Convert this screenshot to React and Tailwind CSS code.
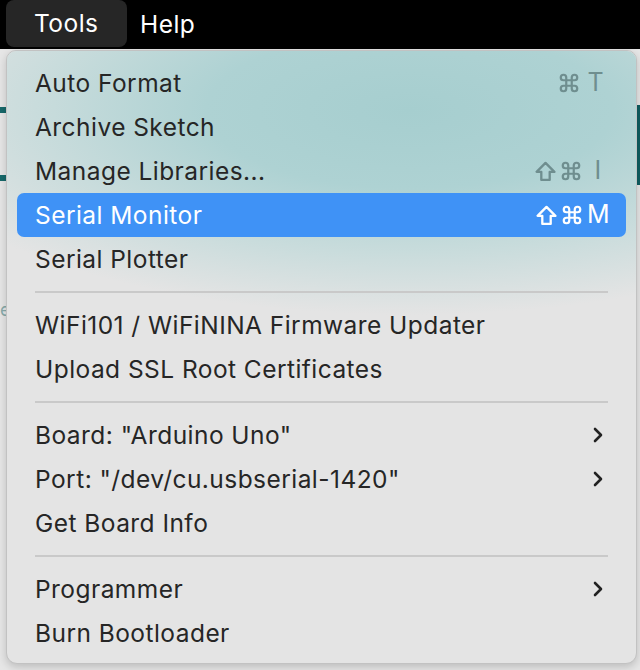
import { ChevronRight } from 'lucide-react'

// macOS style "Tools" menu dropped from the menu bar, over an Arduino IDE window
const groups = [
  [
    { label: 'Auto Format', keys: ['cmd', 'T'] },
    { label: 'Archive Sketch' },
    { label: 'Manage Libraries...', keys: ['shift', 'cmd', 'I'] },
    { label: 'Serial Monitor', keys: ['shift', 'cmd', 'M'], active: true },
    { label: 'Serial Plotter' },
  ],
  [
    { label: 'WiFi101 / WiFiNINA Firmware Updater' },
    { label: 'Upload SSL Root Certificates' },
  ],
  [
    { label: 'Board: "Arduino Uno"', sub: true },
    { label: 'Port: "/dev/cu.usbserial-1420"', sub: true },
    { label: 'Get Board Info' },
  ],
  [{ label: 'Programmer', sub: true }, { label: 'Burn Bootloader' }],
]

const ShiftIcon = () => (
  <svg width="21" height="21" viewBox="0 0 20 20" fill="none" stroke="currentColor" strokeWidth="2.2" strokeLinejoin="round">
    <path d="M10 1.8 L18.5 10.3 H14 V18 H6 V10.3 H1.5 Z" />
  </svg>
)

const CmdIcon = () => (
  <svg width="22" height="22" viewBox="0 0 24 24" fill="none" stroke="currentColor" strokeWidth="2.4" strokeLinecap="round" strokeLinejoin="round">
    <path d="M15 6v12a3 3 0 1 0 3-3H6a3 3 0 1 0 3 3V6a3 3 0 1 0-3 3h12a3 3 0 1 0-3-3" />
  </svg>
)

function Shortcut({ keys, active }) {
  return (
    <span className={`flex items-center gap-[4px] text-[25px] ${active ? 'text-white' : 'text-[#6f8e8f]'}`}>
      {keys.map((k, i) =>
        k === 'shift' ? (
          <ShiftIcon key={i} />
        ) : k === 'cmd' ? (
          <CmdIcon key={i} />
        ) : (
          <span key={i} className={k === 'I' ? 'ml-[6px] w-[12px] text-center' : k === 'T' ? 'ml-[3px]' : ''}>
            {k}
          </span>
        ),
      )}
    </span>
  )
}

function Row({ item }) {
  return (
    <div
      className={`mx-[10px] flex h-[44px] items-center justify-between rounded-[7px] pl-[18px] ${
        item.active ? 'bg-[#3f92f6] pr-[16px] text-white' : 'pr-[22px] text-[#262626]'
      }`}
    >
      <span>{item.label}</span>
      {item.keys && <Shortcut keys={item.keys} active={item.active} />}
      {item.sub && <ChevronRight size={24} strokeWidth={2.6} className="mr-[-6px] text-[#222]" />}
    </div>
  )
}

export default function App() {
  return (
    <div className="relative h-[670px] w-[640px] overflow-hidden bg-[#e6e6e6] font-['Inter','Liberation_Sans',sans-serif] text-[24.5px] tracking-[0.45px]">
      {/* menu bar */}
      <div className="flex h-[49px] items-center bg-black pl-[6px] text-white">
        <div className="flex h-[47px] w-[121px] items-center self-start rounded-[8px] bg-[#262626] pl-[28px]">
          Tools
        </div>
        <div className="pl-[13px]">Help</div>
      </div>

      {/* window behind the menu */}
      <div className="absolute left-0 top-[107px] h-[6px] w-[8px] bg-[#17686a]" />
      <div className="absolute left-0 top-[175px] h-[6px] w-[8px] bg-[#17686a]" />
      <div className="absolute left-0 top-[296px] text-[18px] text-[#8aa]">e</div>
      <div className="absolute right-0 top-[105px] h-[80px] w-[5px] bg-[#0f5d60]" />

      {/* dropdown */}
      <div className="absolute left-[6px] top-[50px] w-[631px] overflow-hidden rounded-b-[11px] rounded-t-[10px] border border-[#c2c2c2] bg-[#e4e4e4] pb-[8px] pt-[10px] shadow-[0_3px_8px_rgba(0,0,0,0.18)]">
        <div className="pointer-events-none absolute inset-x-0 top-0 h-[330px] bg-[radial-gradient(ellipse_85%_62%_at_64%_18%,#a6cecf_0%,#aed2d3_38%,#c9dcdc_70%,rgba(228,228,228,0)_100%)]" />
        <div className="relative">
          {groups.map((g, gi) => (
            <div key={gi}>
              {gi > 0 && (
                <div className="flex h-[22px] items-center px-[28px]">
                  <div className="h-[2px] w-full bg-[#c9c9c9]" />
                </div>
              )}
              {g.map((item) => (
                <Row key={item.label} item={item} />
              ))}
            </div>
          ))}
        </div>
      </div>
    </div>
  )
}
